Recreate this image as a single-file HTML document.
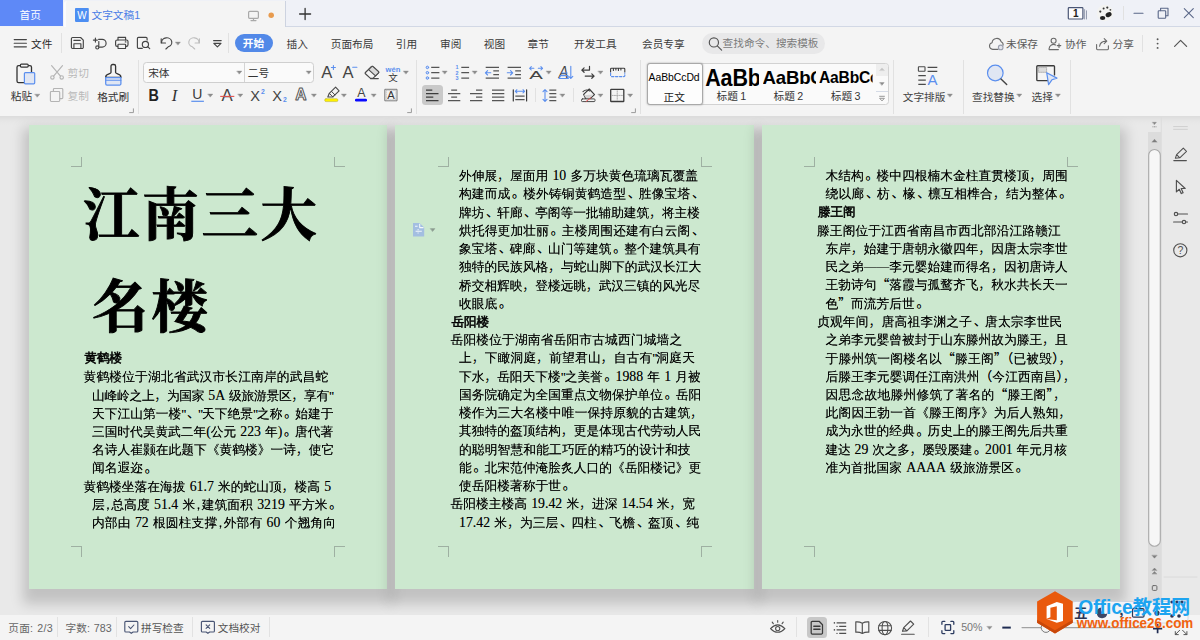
<!DOCTYPE html>
<html lang="zh-CN"><head><meta charset="utf-8"><title>文字文稿1</title>
<style>
*{box-sizing:border-box;margin:0;padding:0}
html,body{width:1200px;height:640px;overflow:hidden;background:#f4f4f4}
body{position:relative;font-family:"Liberation Sans","Noto Sans CJK SC",sans-serif;font-size:12px;color:#333}
#tabbar{position:absolute;left:0;top:0;width:1200px;height:27px;background:#eff1f7;box-shadow:inset 0 -1px 0 #d2d8e5}
#tabline{position:absolute;left:0;top:26px;width:66px;height:1px;background:#f1f2f6}
#hometab{position:absolute;left:0;top:0;width:63px;height:26px;background:#5e89f7}
#doctab{position:absolute;left:64px;top:1px;width:221.5px;height:26px;background:#f4f4f4;border-left:2.5px solid #fbfbfd;border-right:1px solid #cdd3e0;border-radius:3px 0 0 0}
#menubar{position:absolute;left:0;top:27px;width:1200px;height:31px;background:#f4f4f4}
#pill{position:absolute;left:234.5px;top:34px;width:38.5px;height:18px;border-radius:9px;background:#5289e8}
#search{position:absolute;left:702px;top:32.6px;width:123px;height:21.2px;border-radius:10.6px;background:#e8e8e9}
.u{font-size:10.67px;letter-spacing:0}
.sty{position:absolute;overflow:hidden;white-space:nowrap;font-family:"Liberation Sans",sans-serif;font-weight:700;color:#000;letter-spacing:-0.2px}
#ribbon{position:absolute;left:0;top:58px;width:1200px;height:58px;background:#f4f4f4}
#doc{position:absolute;left:0;top:116px;width:1200px;height:499px;background:linear-gradient(#dcdcdc,#e6e6e6 5px,#e9e9e9 9px);overflow:hidden}
#status{position:absolute;left:0;top:615px;width:1200px;height:25px;background:#f4f4f4}
.page{position:absolute;top:8.5px;width:358.5px;height:464.5px;background:#cce8cf;box-shadow:0 9px 12px 6px rgba(0,0,0,.17)}
.ln{position:absolute;white-space:pre;font-family:"Liberation Serif","WenQuanYi Zen Hei","Noto Serif CJK SC",serif;line-height:18px;height:18px;color:#000}
.fa{font-size:12.75px}
.ln .e{font-size:13.8px;letter-spacing:0 !important;text-shadow:0 0 .4px rgba(0,0,0,.4)}
.ln .hp{display:inline-block;width:.5em;text-align:center;font-family:"WenQuanYi Zen Hei","Noto Sans CJK SC",sans-serif}
.ln .qo,.ln .qc,.ln .cm{font-family:"Noto Sans CJK SC","WenQuanYi Zen Hei",sans-serif;font-weight:400}
.ln .cm{font-weight:300}
.ln .ds{font-family:"WenQuanYi Zen Hei","Noto Sans CJK SC",sans-serif}
.ln{text-shadow:0 0 .45px rgba(0,0,0,.6);word-spacing:1px}
.ln .pd{font-family:"Noto Sans CJK SC","WenQuanYi Zen Hei",sans-serif;font-weight:400;display:inline-block;width:1em;text-indent:.13em;position:relative;top:-.06em;letter-spacing:0}
.ln span{line-height:0}
.ln .hq{display:inline-block;width:4px;text-align:center;font-family:"Liberation Serif",serif;letter-spacing:0 !important}
.fb{font-size:12.75px}
.hd{position:absolute;white-space:nowrap;font-family:"WenQuanYi Zen Hei","Noto Sans CJK SC",sans-serif;font-size:12.6px;letter-spacing:-.1px;line-height:18px;height:18px;color:#000;-webkit-text-stroke:.55px #000}
.ttl{position:absolute;white-space:nowrap;font-family:"Liberation Serif","Noto Serif CJK SC",serif;font-weight:700;font-size:56.5px;letter-spacing:2.7px;line-height:70px;height:70px;color:#000;-webkit-text-stroke:0.9px #000}
.mk{position:absolute;width:11px;height:10.5px;border:0 solid #9eb0a2}
.t{position:absolute;white-space:nowrap;line-height:16px;height:16px}
</style></head>
<body>
<div id="tabbar"></div>
<div id="tabline"></div>
<div id="hometab"></div>
<div id="doctab"></div>
<div id="menubar"></div>
<div class="t u" style="left:19.50px;top:6.90px;color:#fff">首页</div>
<div class="t u" style="left:91.50px;top:6.90px;color:#4a7de6">文字文稿1</div>
<div class="t u" style="left:31.00px;top:35.60px;color:#2b2b2b">文件</div>
<div id="pill"></div>
<div class="t u" style="left:242.80px;top:35.30px;color:#fff;font-weight:700">开始</div>
<div class="t u" style="left:286.50px;top:35.60px;color:#3a3a3a">插入</div>
<div class="t u" style="left:330.80px;top:35.60px;color:#3a3a3a">页面布局</div>
<div class="t u" style="left:395.80px;top:35.60px;color:#3a3a3a">引用</div>
<div class="t u" style="left:440.00px;top:35.60px;color:#3a3a3a">审阅</div>
<div class="t u" style="left:483.80px;top:35.60px;color:#3a3a3a">视图</div>
<div class="t u" style="left:527.60px;top:35.60px;color:#3a3a3a">章节</div>
<div class="t u" style="left:574.00px;top:35.60px;color:#3a3a3a">开发工具</div>
<div class="t u" style="left:642.00px;top:35.60px;color:#3a3a3a">会员专享</div>
<div id="search"></div>
<div class="t u" style="left:722.60px;top:35.30px;color:#7a7a7a">查找命令、搜索模板</div>
<div class="t u" style="left:1006.00px;top:35.60px;color:#5a5a5a">未保存</div>
<div class="t u" style="left:1065.00px;top:35.60px;color:#5a5a5a">协作</div>
<div class="t u" style="left:1112.60px;top:35.60px;color:#5a5a5a">分享</div>
<div id="ribbon"></div>
<div style="position:absolute;left:61.00px;top:33.00px;width:1.00px;height:20.00px;background:#e1e1e1"></div>
<div style="position:absolute;left:228.00px;top:33.00px;width:1.00px;height:20.00px;background:#e1e1e1"></div>
<div style="position:absolute;left:1142.00px;top:35.00px;width:1.00px;height:17.00px;background:#e1e1e1"></div>
<div style="position:absolute;left:1122.80px;top:6.00px;width:1.00px;height:14.00px;background:#e1e1e1"></div>
<div style="position:absolute;left:138.00px;top:60.00px;width:1.00px;height:54.00px;background:#e1e1e1"></div>
<div style="position:absolute;left:416.00px;top:60.00px;width:1.00px;height:54.00px;background:#e1e1e1"></div>
<div style="position:absolute;left:640.10px;top:60.00px;width:1.00px;height:54.00px;background:#e1e1e1"></div>
<div style="position:absolute;left:893.00px;top:60.00px;width:1.00px;height:54.00px;background:#e1e1e1"></div>
<div style="position:absolute;left:963.00px;top:60.00px;width:1.00px;height:54.00px;background:#e1e1e1"></div>
<div style="position:absolute;left:1070.10px;top:60.00px;width:1.00px;height:54.00px;background:#e1e1e1"></div>
<div style="position:absolute;left:534.90px;top:88.00px;width:1.00px;height:14.00px;background:#e1e1e1"></div>
<div style="position:absolute;left:573.00px;top:88.00px;width:1.00px;height:14.00px;background:#e1e1e1"></div>
<div class="t u" style="left:10.80px;top:88.40px;color:#333">粘贴</div>
<div class="t u" style="left:67.60px;top:64.90px;color:#b9b9b9">剪切</div>
<div class="t u" style="left:67.60px;top:88.20px;color:#b9b9b9">复制</div>
<div class="t u" style="left:97.20px;top:88.50px;color:#333">格式刷</div>
<div style="position:absolute;left:143.30px;top:61.80px;width:170.60px;height:20.80px;background:#fafafa;border:1px solid #cfcfcf;border-radius:3.5px"></div>
<div style="position:absolute;left:244.00px;top:62.50px;width:1.00px;height:19.50px;background:#d4d4d4"></div>
<div class="t u" style="left:148.20px;top:64.80px;color:#333">宋体</div>
<div class="t u" style="left:247.80px;top:64.80px;color:#333">二号</div>
<div style="position:absolute;left:422.00px;top:85.00px;width:21.00px;height:20.40px;background:#c9c9c9;border-radius:3.5px"></div>
<div style="position:absolute;left:647.00px;top:62.60px;width:241.80px;height:42.80px;background:#fafafa;border:1px solid #d2d2d2;border-radius:3.5px"></div>
<div style="position:absolute;left:875.60px;top:63.60px;width:12.20px;height:12.00px;background:#eeeeee;border-radius:0 3px 0 0"></div>
<div style="position:absolute;left:875.60px;top:91.20px;width:12.20px;height:1.00px;background:#d5dbe6"></div>
<div style="position:absolute;left:647.30px;top:62.80px;width:56.00px;height:42.40px;background:#fdfdfd;border:1px solid #a9a9a9;border-radius:3px;box-shadow:0 0 2px rgba(0,0,0,.35)"></div>
<div class="t u" style="left:648.60px;top:70.30px;font-family:'Liberation Sans',sans-serif;font-size:10.4px;color:#000;letter-spacing:-0.05px">AaBbCcDd</div>
<div class="t u" style="left:663.60px;top:88.50px;color:#222">正文</div>
<div class="sty" style="left:705.3px;top:66.6px;width:54px;height:24px;font-size:21.5px;line-height:25px;transform:scaleY(1.07);transform-origin:0 50%">AaBb</div>
<div class="sty" style="left:762.6px;top:64.6px;width:53.8px;height:24px;font-size:18.6px;line-height:26.6px">AaBbC</div>
<div class="sty" style="left:819.4px;top:64.4px;width:57.4px;height:24px;font-size:16.6px;line-height:27px;transform:scaleX(.94);transform-origin:0 0">AaBbCc</div>
<div class="t u" style="left:716.60px;top:88.30px;color:#333;word-spacing:-0.5px">标题 1</div>
<div class="t u" style="left:773.60px;top:88.30px;color:#333;word-spacing:-0.5px">标题 2</div>
<div class="t u" style="left:830.80px;top:88.30px;color:#333;word-spacing:-0.5px">标题 3</div>
<div class="t u" style="left:902.80px;top:88.50px;color:#444">文字排版</div>
<div class="t u" style="left:972.00px;top:88.50px;color:#444">查找替换</div>
<div class="t u" style="left:1031.60px;top:88.50px;color:#444">选择</div>
<div id="doc">
<div class="page" style="left:28.5px">
<div class="mk" style="left:42.5px;top:32px;border-right-width:1px;border-bottom-width:1px"></div>
<div class="mk" style="left:305.7px;top:32px;border-left-width:1px;border-bottom-width:1px"></div>
<div class="mk" style="left:42.5px;top:421.5px;border-right-width:1px;border-top-width:1px"></div>
<div class="mk" style="left:305.7px;top:421.5px;border-left-width:1px;border-top-width:1px"></div>
<div class="ttl" style="left:54.5px;top:56.5px">江南三大</div>
<div class="ttl" style="left:63.5px;top:148.5px">名楼</div>
<div class="hd fa" style="left:55.90px;top:224.40px;">黄鹤楼</div>
<div class="ln fa" style="left:55.00px;top:243.90px;letter-spacing:0.139px;">黄鹤楼位于湖北省武汉市长江南岸的武昌蛇</div>
<div class="ln fa" style="left:63.50px;top:262.10px;letter-spacing:-0.270px;">山峰岭之上<span class="cm">，</span>为国家 <span class="e">5A</span> 级旅游景区<span class="cm">，</span>享有<span class="hq">&quot;</span></div>
<div class="ln fa" style="left:63.50px;top:280.30px;">天下江山第一楼<span class="hq">&quot;</span><span class="pd">、</span><span class="hq">&quot;</span>天下绝景<span class="hq">&quot;</span>之称<span class="pd">。</span>始建于</div>
<div class="ln fa" style="left:63.50px;top:298.50px;letter-spacing:-0.068px;">三国时代吴黄武二年<span class="e">(</span>公元 <span class="e">223</span> 年<span class="e">)</span><span class="pd">。</span>唐代著</div>
<div class="ln fa" style="left:63.50px;top:316.70px;">名诗人崔颢在此题下《黄鹤楼》一诗<span class="cm">，</span>使它</div>
<div class="ln fa" style="left:63.50px;top:334.90px;">闻名遐迩<span class="pd">。</span></div>
<div class="ln fa" style="left:55.00px;top:353.10px;">黄鹤楼坐落在海拔 <span class="e">61.7</span> 米的蛇山顶<span class="cm">，</span>楼高 <span class="e">5</span></div>
<div class="ln fa" style="left:63.50px;top:371.30px;letter-spacing:0.080px;">层<span class="hp">,</span>总高度 <span class="e">51.4</span> 米<span class="hp">,</span>建筑面积 <span class="e">3219</span> 平方米<span class="pd">。</span></div>
<div class="ln fa" style="left:63.50px;top:389.50px;letter-spacing:0.113px;">内部由 <span class="e">72</span> 根圆柱支撑<span class="hp">,</span>外部有 <span class="e">60</span> 个翘角向</div>
</div>
<div class="page" style="left:395px">
<div class="mk" style="left:42.5px;top:32px;border-right-width:1px;border-bottom-width:1px"></div>
<div class="mk" style="left:305.7px;top:32px;border-left-width:1px;border-bottom-width:1px"></div>
<div class="mk" style="left:42.5px;top:421.5px;border-right-width:1px;border-top-width:1px"></div>
<div class="mk" style="left:305.7px;top:421.5px;border-left-width:1px;border-top-width:1px"></div>
<div class="ln fb" style="left:64.00px;top:42.40px;">外伸展<span class="cm">，</span>屋面用 <span class="e">10</span> 多万块黄色琉璃瓦覆盖</div>
<div class="ln fb" style="left:64.00px;top:60.70px;letter-spacing:0.110px;">构建而成<span class="pd">。</span>楼外铸铜黄鹤造型<span class="pd">、</span>胜像宝塔<span class="pd">、</span></div>
<div class="ln fb" style="left:64.00px;top:79.00px;letter-spacing:-0.083px;">牌坊<span class="pd">、</span>轩廊<span class="pd">、</span>亭阁等一批辅助建筑<span class="cm">，</span>将主楼</div>
<div class="ln fb" style="left:64.00px;top:97.30px;letter-spacing:0.110px;">烘托得更加壮丽<span class="pd">。</span>主楼周围还建有白云阁<span class="pd">、</span></div>
<div class="ln fb" style="left:64.00px;top:115.60px;letter-spacing:-0.056px;">象宝塔<span class="pd">、</span>碑廊<span class="pd">、</span>山门等建筑<span class="pd">。</span>整个建筑具有</div>
<div class="ln fb" style="left:64.00px;top:133.90px;">独特的民族风格<span class="cm">，</span>与蛇山脚下的武汉长江大</div>
<div class="ln fb" style="left:64.00px;top:152.20px;letter-spacing:-0.056px;">桥交相辉映<span class="cm">，</span>登楼远眺<span class="cm">，</span>武汉三镇的风光尽</div>
<div class="ln fb" style="left:64.00px;top:170.50px;">收眼底<span class="pd">。</span></div>
<div class="hd fb" style="left:56.40px;top:188.15px;">岳阳楼</div>
<div class="ln fb" style="left:55.50px;top:206.40px;letter-spacing:0.132px;">岳阳楼位于湖南省岳阳市古城西门城墙之</div>
<div class="ln fb" style="left:64.00px;top:224.70px;letter-spacing:0.139px;">上<span class="cm">，</span>下瞰洞庭<span class="cm">，</span>前望君山<span class="cm">，</span>自古有<span class="hq">&quot;</span>洞庭天</div>
<div class="ln fb" style="left:64.00px;top:243.00px;letter-spacing:-0.043px;">下水<span class="cm">，</span>岳阳天下楼<span class="hq">&quot;</span>之美誉<span class="pd">。</span><span class="e">1988</span> 年 <span class="e">1</span> 月被</div>
<div class="ln fb" style="left:64.00px;top:261.30px;">国务院确定为全国重点文物保护单位<span class="pd">。</span>岳阳</div>
<div class="ln fb" style="left:64.00px;top:279.60px;letter-spacing:0.100px;">楼作为三大名楼中唯一保持原貌的古建筑<span class="cm">，</span></div>
<div class="ln fb" style="left:64.00px;top:297.80px;">其独特的盔顶结构<span class="cm">，</span>更是体现古代劳动人民</div>
<div class="ln fb" style="left:64.00px;top:316.00px;letter-spacing:0.118px;">的聪明智慧和能工巧匠的精巧的设计和技</div>
<div class="ln fb" style="left:64.00px;top:334.20px;">能<span class="pd">。</span>北宋范仲淹脍炙人口的《岳阳楼记》更</div>
<div class="ln fb" style="left:64.00px;top:352.50px;">使岳阳楼著称于世<span class="pd">。</span></div>
<div class="ln fb" style="left:55.50px;top:370.90px;">岳阳楼主楼高 <span class="e">19.42</span> 米<span class="cm">，</span>进深 <span class="e">14.54</span> 米<span class="cm">，</span>宽</div>
<div class="ln fb" style="left:64.00px;top:389.00px;letter-spacing:0.071px;"><span class="e">17.42</span> 米<span class="cm">，</span>为三层<span class="pd">、</span>四柱<span class="pd">、</span>飞檐<span class="pd">、</span>盔顶<span class="pd">、</span>纯</div>
</div>
<div class="page" style="left:761.5px">
<div class="mk" style="left:42.5px;top:32px;border-right-width:1px;border-bottom-width:1px"></div>
<div class="mk" style="left:305.7px;top:32px;border-left-width:1px;border-bottom-width:1px"></div>
<div class="mk" style="left:42.5px;top:421.5px;border-right-width:1px;border-top-width:1px"></div>
<div class="mk" style="left:305.7px;top:421.5px;border-left-width:1px;border-top-width:1px"></div>
<div class="ln fb" style="left:64.00px;top:42.30px;">木结构<span class="pd">。</span>楼中四根楠木金柱直贯楼顶<span class="cm">，</span>周围</div>
<div class="ln fb" style="left:64.00px;top:60.60px;letter-spacing:0.170px;">绕以廊<span class="pd">、</span>枋<span class="pd">、</span>椽<span class="pd">、</span>檩互相榫合<span class="cm">，</span>结为整体<span class="pd">。</span></div>
<div class="hd fb" style="left:56.40px;top:78.90px;">滕王阁</div>
<div class="ln fb" style="left:55.50px;top:97.00px;letter-spacing:0.083px;">滕王阁位于江西省南昌市西北部沿江路赣江</div>
<div class="ln fb" style="left:64.00px;top:115.20px;">东岸<span class="cm">，</span>始建于唐朝永徽四年<span class="cm">，</span>因唐太宗李世</div>
<div class="ln fb" style="left:64.00px;top:133.40px;">民之弟<span class="ds">—</span><span class="ds">—</span>李元婴始建而得名<span class="cm">，</span>因初唐诗人</div>
<div class="ln fb" style="left:64.00px;top:151.60px;">王勃诗句<span class="qo">“</span>落霞与孤鹜齐飞<span class="cm">，</span>秋水共长天一</div>
<div class="ln fb" style="left:64.00px;top:170.00px;">色<span class="qc">”</span>而流芳后世<span class="pd">。</span></div>
<div class="ln fb" style="left:55.50px;top:188.40px;letter-spacing:0.181px;">贞观年间<span class="cm">，</span>唐高祖李渊之子<span class="pd">、</span>唐太宗李世民</div>
<div class="ln fb" style="left:64.00px;top:206.80px;">之弟李元婴曾被封于山东滕州故为滕王<span class="cm">，</span>且</div>
<div class="ln fb" style="left:64.00px;top:225.10px;letter-spacing:0.200px;">于滕州筑一阁楼名以<span class="qo">“</span>滕王阁<span class="qc">”</span><span class="qo">（</span>已被毁<span class="qc">）</span><span class="cm">，</span></div>
<div class="ln fb" style="left:64.00px;top:243.40px;letter-spacing:0.080px;">后滕王李元婴调任江南洪州<span class="qo">（</span>今江西南昌<span class="qc">）</span><span class="cm">，</span></div>
<div class="ln fb" style="left:64.00px;top:261.50px;letter-spacing:0.250px;">因思念故地滕州修筑了著名的<span class="qo">“</span>滕王阁<span class="qc">”</span><span class="cm">，</span></div>
<div class="ln fb" style="left:64.00px;top:279.70px;letter-spacing:0.200px;">此阁因王勃一首《滕王阁序》为后人熟知<span class="cm">，</span></div>
<div class="ln fb" style="left:64.00px;top:297.80px;">成为永世的经典<span class="pd">。</span>历史上的滕王阁先后共重</div>
<div class="ln fb" style="left:64.00px;top:316.00px;letter-spacing:-0.239px;">建达 <span class="e">29</span> 次之多<span class="cm">，</span>屡毁屡建<span class="pd">。</span><span class="e">2001</span> 年元月核</div>
<div class="ln fb" style="left:64.00px;top:334.20px;">准为首批国家 <span class="e">AAAA</span> 级旅游景区<span class="pd">。</span></div>
</div>
</div>
<div id="status"></div>
<div style="position:absolute;left:56.75px;top:617.00px;width:1.00px;height:20.00px;background:#e2e2e2"></div>
<div style="position:absolute;left:116.10px;top:617.00px;width:1.00px;height:20.00px;background:#e2e2e2"></div>
<div style="position:absolute;left:192.00px;top:617.00px;width:1.00px;height:20.00px;background:#e2e2e2"></div>
<div style="position:absolute;left:268.90px;top:617.00px;width:1.00px;height:20.00px;background:#e2e2e2"></div>
<div style="position:absolute;left:796.00px;top:617.00px;width:1.00px;height:20.00px;background:#e2e2e2"></div>
<div style="position:absolute;left:928.00px;top:617.00px;width:1.00px;height:20.00px;background:#e2e2e2"></div>
<div class="t u" style="left:8.30px;top:619.60px;color:#666;word-spacing:.8px;letter-spacing:.25px">页面: 2/3</div>
<div class="t u" style="left:65.50px;top:619.60px;color:#666;word-spacing:.5px;letter-spacing:.1px">字数: 783</div>
<div class="t u" style="left:141.00px;top:619.60px;color:#555">拼写检查</div>
<div class="t u" style="left:217.80px;top:619.60px;color:#555">文档校对</div>
<div style="position:absolute;left:806.50px;top:617.00px;width:20.00px;height:20.50px;background:#c8c8c8;border-radius:3.5px"></div>
<div class="t u" style="left:961.20px;top:619.30px;color:#777">50%</div>
<svg id="icons" width="1200" height="640" viewBox="0 0 1200 640" style="position:absolute;left:0;top:0;pointer-events:none" fill="none" stroke-linecap="round" stroke-linejoin="round">
<!-- icons_top.py -->
<rect x="75" y="8.1" width="13.8" height="13.8" rx=".8" fill="#4c8ef2"/>
<text x="81.9" y="18.9" text-anchor="middle" font-family="Liberation Sans,sans-serif" font-size="10" font-weight="400" fill="#fff" stroke="none">W</text>
<g stroke="#a9a9a9" stroke-width="1.2"><rect x="248.6" y="11.4" width="9.8" height="6.9" rx="1"/><path d="M253.5 18.5v1.8M251 20.6h5"/></g>
<circle cx="271.2" cy="15.3" r="2.75" fill="#e89b4e"/>
<path d="M299.6 14h11M305.1 8.5v11" stroke="#333" stroke-width="1.3"/>
<rect x="1068.3" y="7.6" width="14.6" height="11.4" rx=".8" fill="#fdfdfe" stroke="#4a5675" stroke-width="1.2"/>
<text x="1075.7" y="17.3" text-anchor="middle" font-family="Liberation Sans,sans-serif" font-size="10" font-weight="700" fill="#222" stroke="none">1</text>
<path d="M1084.6 9.6v9.4M1086.5 10.8v8.2" stroke="#8b93a8" stroke-width=".9"/>
<g stroke="none"><circle cx="1105" cy="13" r="8.2" fill="#f3f3f1"/><ellipse cx="1108.6" cy="14.6" rx="3.1" ry="2.3" fill="#222" transform="rotate(-25 1108.6 14.6)"/><ellipse cx="1102.6" cy="18" rx="2.7" ry="2" fill="#222"/><circle cx="1100.3" cy="11.6" r="1.1" fill="#333"/><circle cx="1103.6" cy="8.6" r="1" fill="#333"/><circle cx="1107.3" cy="7.6" r="1.1" fill="#333"/><circle cx="1110.4" cy="9.8" r=".9" fill="#444"/></g>
<g stroke="#5a6788" stroke-width="1.1"><path d="M1134 13.3h9"/><path d="M1160.6 10.6v-2.3h7.4v7.4h-2.2"/><rect x="1158.2" y="10.7" width="7.5" height="7.5" rx=".8"/><path d="M1184.3 8.7l9 9M1193.3 8.7l-9 9"/></g>
<path d="M14.2 39.6h12.2M14.2 43.2h12.2M14.2 46.8h12.2" stroke="#444" stroke-width="1.15"/>
<g stroke="#444" stroke-width="1.15"><path d="M72.6 37.5h8l2.7 2.7v7.1a1.2 1.2 0 0 1-1.2 1.2h-9.5a1.2 1.2 0 0 1-1.2-1.2v-8.6a1.2 1.2 0 0 1 1.2-1.2z"/><path d="M73.9 48.3v-4.6h7v4.6M73.9 40.4h6.3"/><path d="M98.6 39.3h3.6a3.9 3.9 0 0 1 0 7.8h-3.2"/><path d="M98.8 41.5v4.3"/><circle cx="97.3" cy="47.4" r="1.55"/><path d="M93.4 40.1h4M95.4 38.1v4"/><path d="M118 40v-2.6h7.6v2.6"/><rect x="115.6" y="40" width="12.4" height="6.4" rx="1.6"/><rect x="118" y="44.2" width="7.6" height="4.3" rx=".6" fill="#f4f4f4"/><path d="M125.3 41.9h.6"/><path d="M142.3 48.3h-3.8a1.1 1.1 0 0 1-1.1-1.1v-8.7a1.1 1.1 0 0 1 1.1-1.1h7.5a1.1 1.1 0 0 1 1.1 1.1v1.6"/><circle cx="145.4" cy="44.4" r="3.1"/><path d="M147.7 46.7l2 2"/><path d="M161.2 38.7v4.3h4.3"/><path d="M161.6 42.6a5.1 4.6 0 1 1 6.6 4.2l-2.3 2.2"/><path d="M213.6 40.6h7.6M213.8 43.3l3.6 3.5l3.6-3.5z"/></g>
<g stroke="#bdbdbd" stroke-width="1.15"><path d="M199.4 38.7v4.3h-4.3"/><path d="M199 42.6a5.1 4.6 0 1 0-6.6 4.2l2.3 2.2"/></g>
<path d="M175.60 42.10 h4.80 l-2.40 2.80 z" fill="#8c8c8c" stroke="#8c8c8c" stroke-width=".4"/>
<g stroke="#555" stroke-width="1.2"><circle cx="713.9" cy="42.4" r="4.6"/><path d="M717.3 45.9l4.3 4.3"/></g>
<g stroke="#6a6a6a" stroke-width="1.1"><path d="M998 49.4h-5.3a3.4 3.4 0 0 1-.6-6.7a4.6 4.6 0 0 1 9-1a3.3 3.3 0 0 1 2 3.4"/><circle cx="1000.7" cy="47.4" r="2.3" stroke="#9a9fae" fill="#e3e5ec"/></g>
<g stroke="#6a6a6a" stroke-width="1.1"><circle cx="1053.6" cy="40.8" r="2.5"/><path d="M1058.4 49.6h-9.3v-1a4.4 4.4 0 0 1 6.5-3.6"/><path d="M1057.2 45.6h3.6M1059 43.8v3.6"/></g>
<g stroke="#6a6a6a" stroke-width="1.1"><path d="M1096.6 44.6v4.2a.9.9 0 0 0 .9.9h10a.9.9 0 0 0 .9-.9v-3"/><path d="M1099.6 46.3q.6-5 6.4-5.2M1104.2 38.6l2.6 2.5l-2.6 2.5"/></g>
<g fill="#555" stroke="none"><circle cx="1157.6" cy="39.3" r=".95"/><circle cx="1157.6" cy="43.6" r=".95"/><circle cx="1157.6" cy="47.9" r=".95"/></g>
<path d="M1174.6 46.4l6-6l6 6" stroke="#555" stroke-width="1.2"/>
<!-- icons_ribbon.py -->
<rect x="17" y="65.6" width="14.5" height="17" rx="1.6" stroke="#333" stroke-width="1.3"/>
<rect x="20.4" y="64.1" width="7.8" height="3" rx="1" fill="#f4f4f4" stroke="#333" stroke-width="1.2"/>
<rect x="24.4" y="72.6" width="10.3" height="11.2" rx="1" fill="#e0e6f3" stroke="#5b8fee" stroke-width="1.2"/>
<path d="M35.00 94.20 h4.80 l-2.40 2.80 z" fill="#8c8c8c" stroke="#8c8c8c" stroke-width=".4"/>
<g stroke="#b4b4b4" stroke-width="1.15"><path d="M51.6 65.6l8.9 10.6M62.5 65.6l-8.9 10.6"/><circle cx="52.4" cy="77.4" r="1.7"/><circle cx="61.7" cy="77.4" r="1.7"/></g>
<g stroke="#b4b4b4" stroke-width="1.15"><path d="M53.4 91v-1.6a.9.9 0 0 1 .9-.9h7.6a.9.9 0 0 1 .9.9v8.3a.9.9 0 0 1-.9.9h-1.8"/><rect x="50.4" y="91.5" width="9.3" height="10" rx=".9"/></g>
<path d="M111 72.6v-6.4a1.7 1.7 0 0 1 1.7-1.7h1.2a1.7 1.7 0 0 1 1.7 1.7v6.4c0 1.5 5.3 1.3 5.3 4.3v.6h-15.2v-.6c0-3 5.3-2.8 5.3-4.300z" stroke="#333" stroke-width="1.3"/>
<path d="M105.7 77.5h15.2v6.200a1.3 1.3 0 0 1-1.300 1.300h-12.600a1.300 1.300 0 0 1-1.300-1.300z" fill="#e0e6f3" stroke="#5b8fee" stroke-width="1.25"/>
<path d="M105.7 80.300h15.200" stroke="#5b8fee" stroke-width="1.1"/>
<path d="M133.40 108.80v3.8h-3.8" stroke="#9a9a9a" stroke-width="1"/>
<path d="M411.40 108.80v3.8h-3.8" stroke="#9a9a9a" stroke-width="1"/>
<path d="M635.40 108.80v3.8h-3.8" stroke="#9a9a9a" stroke-width="1"/>
<path d="M237.00 71.10 h4.80 l-2.40 2.80 z" fill="#8c8c8c" stroke="#8c8c8c" stroke-width=".4"/>
<path d="M306.40 71.10 h4.80 l-2.40 2.80 z" fill="#8c8c8c" stroke="#8c8c8c" stroke-width=".4"/>
<text x="326.9" y="78.4" text-anchor="middle" font-family="Liberation Sans,sans-serif" font-size="16.6" fill="#444" stroke="none">A</text>
<text x="348.1" y="78.4" text-anchor="middle" font-family="Liberation Sans,sans-serif" font-size="16.6" fill="#444" stroke="none">A</text>
<g stroke="#4a4a4a" stroke-width="1.2"></g>
<path d="M331.400 67.500h4M333.400 65.500v4M352.700 67.300h4.200" stroke="#5b8fee" stroke-width="1.1"/>
<path d="M370.500 78.400l-5.100-4.600a.9.900 0 0 1 0-1.300l6.200-6a.9.900 0 0 1 1.300 0l5.600 5.100a.9.900 0 0 1 0 1.300l-5.600 5.500z" stroke="#4a4a4a" stroke-width="1.15"/>
<path d="M368.600 69.600l3.100-3a.9.900 0 0 1 1.300 0l5.500 5a.9.900 0 0 1 0 1.300l-3 3z" fill="#d9d9d9" stroke="#4a4a4a" stroke-width="1.1"/>
<path d="M370.500 78.600h7.800" stroke="#4a4a4a" stroke-width="1.15"/>
<text x="393" y="71.600" text-anchor="middle" font-family="Liberation Sans,sans-serif" font-size="7.600" font-weight="700" fill="#5b8fee" stroke="none">wén</text>
<text x="393" y="80.600" text-anchor="middle" font-family="Noto Sans CJK SC,sans-serif" font-size="9.500" fill="#333" stroke="none">文</text>
<path d="M403.60 71.10 h4.80 l-2.40 2.80 z" fill="#8c8c8c" stroke="#8c8c8c" stroke-width=".4"/>
<text x="148.400" y="100.700" font-family="Liberation Sans,sans-serif" font-size="15.800" font-weight="700" fill="#222" stroke="none" textLength="10.400" lengthAdjust="spacingAndGlyphs">B</text>
<text x="171.800" y="100.600" font-family="Liberation Serif,serif" font-size="16.500" font-style="italic" fill="#333" stroke="none">I</text>
<text x="197.300" y="99.200" text-anchor="middle" font-family="Liberation Sans,sans-serif" font-size="14" fill="#3a3a3a" stroke="none">U</text>
<path d="M191.300 101.300h12.600" stroke="#5b8fee" stroke-width="1.2" stroke-linecap="butt"/>
<path d="M208.00 94.10 h4.80 l-2.40 2.80 z" fill="#8c8c8c" stroke="#8c8c8c" stroke-width=".4"/>
<text x="227.2" y="100.9" text-anchor="middle" font-family="Liberation Sans,sans-serif" font-size="16.8" fill="#444" stroke="none">A</text>
<path d="M220.200 96.400h14.100" stroke="#e0524f" stroke-width="1.1" stroke-linecap="butt"/>
<path d="M238.00 94.10 h4.80 l-2.40 2.80 z" fill="#8c8c8c" stroke="#8c8c8c" stroke-width=".4"/>
<text x="255.2" y="100.7" text-anchor="middle" font-family="Liberation Sans,sans-serif" font-size="14.6" fill="#444" stroke="none">X</text>
<text x="277.2" y="100.7" text-anchor="middle" font-family="Liberation Sans,sans-serif" font-size="14.6" fill="#444" stroke="none">X</text>
<text x="261" y="94.400" font-family="Liberation Sans,sans-serif" font-size="6.800" font-weight="700" fill="#5b8fee" stroke="none">2</text>
<text x="283" y="102.400" font-family="Liberation Sans,sans-serif" font-size="6.800" font-weight="700" fill="#5b8fee" stroke="none">2</text>
<text x="301" y="100.400" text-anchor="middle" font-family="Liberation Sans,sans-serif" font-size="15.600" font-weight="700" fill="#fcfcfc" stroke="#555" stroke-width=".95">A</text>
<path d="M311.60 94.10 h4.80 l-2.40 2.80 z" fill="#8c8c8c" stroke="#8c8c8c" stroke-width=".4"/>
<path d="M327.800 97l1.500-3.700l6.300-6.100l3.500 3.600l-6.300 6.100z" stroke="#4a4a4a" stroke-width="1.100"/><path d="M329.300 93.300l3.500 3.600M331.400 91.300l3.500 3.600" stroke="#4a4a4a" stroke-width="1"/>
<rect x="324.700" y="98.700" width="13.200" height="2.900" rx="1.300" fill="#fff100" stroke="#b5ae2a" stroke-width=".5"/>
<path d="M341.60 94.10 h4.80 l-2.40 2.80 z" fill="#8c8c8c" stroke="#8c8c8c" stroke-width=".4"/>
<text x="361.3" y="97.4" text-anchor="middle" font-family="Liberation Sans,sans-serif" font-size="12.4" fill="#444" stroke="none">A</text>
<rect x="355" y="98.800" width="12" height="2.600" rx="1.200" fill="#0a0aff" stroke="none"/>
<path d="M371.40 94.10 h4.80 l-2.40 2.80 z" fill="#8c8c8c" stroke="#8c8c8c" stroke-width=".4"/>
<rect x="385.200" y="89.300" width="11.800" height="11.500" stroke="#7a7a7a" stroke-width="1" fill="#f2f2f2"/>
<path d="M386.200 90.300h9.800v9.500h-9.800z" stroke="#bdbdbd" stroke-width=".8" stroke-dasharray="1.200 1.200"/>
<text x="391.1" y="99.4" text-anchor="middle" font-family="Liberation Sans,sans-serif" font-size="11.2" fill="#333" stroke="none">A</text>
<g stroke="#5b8fee" stroke-width="1" fill="#cfdcf7"><circle cx="427.400" cy="67.400" r="1.250"/><circle cx="427.400" cy="72.700" r="1.250"/><circle cx="427.400" cy="78" r="1.250"/></g>
<path d="M431.20 67.40H439.40M431.20 72.70H439.40M431.20 78.00H439.40" stroke="#555" stroke-width="1.25" stroke-linecap="butt"/>
<path d="M442.40 71.10 h4.80 l-2.40 2.80 z" fill="#8c8c8c" stroke="#8c8c8c" stroke-width=".4"/>
<text x="457" y="69.3" text-anchor="middle" font-family="Liberation Sans,sans-serif" font-size="5.400" font-weight="700" fill="#5b8fee" stroke="none">1</text>
<text x="457" y="74.6" text-anchor="middle" font-family="Liberation Sans,sans-serif" font-size="5.400" font-weight="700" fill="#5b8fee" stroke="none">2</text>
<text x="457" y="79.9" text-anchor="middle" font-family="Liberation Sans,sans-serif" font-size="5.400" font-weight="700" fill="#5b8fee" stroke="none">3</text>
<path d="M461.30 67.40H469.10M461.30 72.70H469.10M461.30 78.00H469.10" stroke="#555" stroke-width="1.25" stroke-linecap="butt"/>
<path d="M472.40 71.10 h4.80 l-2.40 2.80 z" fill="#8c8c8c" stroke="#8c8c8c" stroke-width=".4"/>
<path d="M485.70 67.30H499.00M493.30 70.90H499.00M493.30 74.60H499.00M485.70 78.20H499.00" stroke="#555" stroke-width="1.25" stroke-linecap="butt"/>
<path d="M485.400 72.800h5.400M487.600 70.600l-2.200 2.200l2.200 2.200" stroke="#5b8fee" stroke-width="1.100"/>
<path d="M507.60 67.30H521.00M515.20 70.90H521.00M515.20 74.60H521.00M507.60 78.20H521.00" stroke="#555" stroke-width="1.25" stroke-linecap="butt"/>
<path d="M507.300 72.800h5.400M510.500 70.600l2.200 2.200l-2.200 2.200" stroke="#5b8fee" stroke-width="1.100"/>
<text x="536" y="78.6" text-anchor="middle" font-family="Liberation Sans,sans-serif" font-size="11.8" fill="#444" stroke="none" textLength="13.6" lengthAdjust="spacingAndGlyphs">A</text>
<path d="M529.600 68.300h4.300M531.300 66.600l-1.700 1.700l1.700 1.700M538.300 68.300h4.300M540.900 66.600l1.700 1.700l-1.700 1.700" stroke="#5b8fee" stroke-width="1.050"/>
<path d="M546.40 71.10 h4.80 l-2.40 2.80 z" fill="#8c8c8c" stroke="#8c8c8c" stroke-width=".4"/>
<text x="563.6" y="78.3" text-anchor="middle" font-family="Liberation Sans,sans-serif" font-size="16" fill="#444" stroke="none" font-style="italic" textLength="9.6" lengthAdjust="spacingAndGlyphs">A</text>
<path d="M560.500 75.600h7.200l.600 2.900h-9.300zM561.800 73h5.400" stroke="#5b8fee" stroke-width="1.100"/>
<path d="M570.800 66.200v12.200M568.800 76.300l2 2.200l2-2.200" stroke="#5b8fee" stroke-width="1.100"/>
<path d="M589.500 66.400v3.700h-7.600M584.100 67.900l-2.300 2.200l2.300 2.200M585.200 76.100h8.800M591.800 73.900l2.300 2.200l-2.300 2.200" stroke="#3c3c3c" stroke-width="1.200"/>
<path d="M598.20 71.10 h4.80 l-2.40 2.80 z" fill="#8c8c8c" stroke="#8c8c8c" stroke-width=".4"/>
<path d="M610.600 72v-2.900a.9.900 0 0 1 .9-.9h12.400a.9.900 0 0 1 .9.900v2.900M613.400 68.400v2M615.900 68.400v1.500M618.400 68.400v2M620.900 68.400v1.500" stroke="#3c3c3c" stroke-width="1.100"/>
<path d="M610.600 73v2.700a.9.900 0 0 0 .9.900h12.400a.9.900 0 0 0 .9-.9v-2.700" stroke="#5b8fee" stroke-width="1.150" stroke-dasharray="2.400 1.600"/>
<path d="M426.00 90.00H432.30M426.00 93.50H438.50M426.00 97.00H433.30M426.00 100.50H438.50" stroke="#3c3c3c" stroke-width="1.25" stroke-linecap="butt"/>
<path d="M451.20 90.00H457.10M448.00 93.50H460.30M451.20 97.00H457.10M448.00 100.50H460.30" stroke="#555" stroke-width="1.25" stroke-linecap="butt"/>
<path d="M476.00 90.00H482.30M470.00 93.50H482.30M476.00 97.00H482.30M470.00 100.50H482.30" stroke="#555" stroke-width="1.25" stroke-linecap="butt"/>
<path d="M492.00 90.00H504.30M492.00 93.50H504.30M492.00 97.00H504.30M492.00 100.50H504.30" stroke="#555" stroke-width="1.25" stroke-linecap="butt"/>
<path d="M513.300 89.800v11.200M526.600 89.800v11.200" stroke="#3c3c3c" stroke-width="1.200"/>
<path d="M515.30 96.00H524.60M515.30 99.60H524.60" stroke="#555" stroke-width="1.25" stroke-linecap="butt"/>
<path d="M515.300 91.300h9.300M516.900 89.700l-1.600 1.600l1.600 1.600M523 89.700l1.600 1.600l-1.600 1.600" stroke="#5b8fee" stroke-width="1.050"/>
<path d="M545 89.600v11.800M543 91.600l2-2l2 2M543 99.400l2 2l2-2" stroke="#5b8fee" stroke-width="1.100"/>
<path d="M549.30 90.00H556.30M549.30 93.50H556.30M549.30 97.00H556.30M549.30 100.50H556.30" stroke="#555" stroke-width="1.25" stroke-linecap="butt"/>
<path d="M560.10 94.10 h4.80 l-2.40 2.80 z" fill="#8c8c8c" stroke="#8c8c8c" stroke-width=".4"/>
<path d="M583.600 94.300l5.700-5.300l5.200 5.600l-4.900 4.600h-3.600z" stroke="#3c3c3c" stroke-width="1.150"/><path d="M583 91.600q3-3 6.800-.6" stroke="#3c3c3c" stroke-width="1.050"/>
<path d="M583.800 95.300l9.500-.8l-3.700 3.400h-3.500z" fill="#d6d6d6" stroke="none"/>
<rect x="581.500" y="98.900" width="13.500" height="2.700" rx=".9" stroke="#4a4a4a" stroke-width="1" fill="#f4f4f4"/>
<path d="M586.200 101.400l4.700-3.600" stroke="#e0524f" stroke-width="1"/>
<path d="M598.20 94.10 h4.80 l-2.40 2.80 z" fill="#8c8c8c" stroke="#8c8c8c" stroke-width=".4"/>
<rect x="610.700" y="89.400" width="13.100" height="12.100" rx=".6" stroke="#3c3c3c" stroke-width="1.300"/>
<path d="M617.250 90.800v9.400M612 95.450h10.500" stroke="#a8a8a8" stroke-width=".9" stroke-dasharray="1.200 1.100"/>
<path d="M627.90 94.10 h4.80 l-2.40 2.80 z" fill="#8c8c8c" stroke="#8c8c8c" stroke-width=".4"/>
<path d="M879.800 70.300l2.200-2.400l2.200 2.400z" fill="#c4c4c4" stroke="#c4c4c4" stroke-width=".4"/>
<path d="M879.80 82.60 h4.40 l-2.20 2.60 z" fill="#8c8c8c" stroke="#8c8c8c" stroke-width=".4"/>
<path d="M879.600 96.300h4.800M879.900 98.600l2.100 2.300l2.100-2.300z" stroke="#8a8a8a" stroke-width=".9"/>
<rect x="918.400" y="66.800" width="6.600" height="4.500" rx=".5" stroke="#4a4a4a" stroke-width="1.100"/>
<path d="M927.60 67.30H937.30M927.60 71.30H937.30" stroke="#4a4a4a" stroke-width="1.25" stroke-linecap="butt"/>
<path d="M918.30 75.50H925.80M918.30 80.00H925.80M918.30 84.40H925.80" stroke="#4a4a4a" stroke-width="1.25" stroke-linecap="butt"/>
<text x="932.6" y="84.6" text-anchor="middle" font-family="Liberation Sans,sans-serif" font-size="15" fill="#5b8fee" stroke="none">A</text>
<path d="M947.60 94.10 h4.80 l-2.40 2.80 z" fill="#8c8c8c" stroke="#8c8c8c" stroke-width=".4"/>
<circle cx="995.300" cy="73" r="7.800" fill="#e0e6f3" stroke="#5b8fee" stroke-width="1.200"/>
<path d="M1001 78.900l5.700 5.600" stroke="#444" stroke-width="1.400"/>
<path d="M1017.00 94.10 h4.80 l-2.40 2.80 z" fill="#8c8c8c" stroke="#8c8c8c" stroke-width=".4"/>
<path d="M1048 80.600h-10.300a.9.900 0 0 1-.9-.9v-13.100a.9.900 0 0 1 .9-.9h15.900a.9.900 0 0 1 .9.900v8.300" stroke="#3a3a3a" stroke-width="1.350"/>
<rect x="1038.600" y="67.300" width="8" height="5" fill="#dcdcdc" stroke="#9a9a9a" stroke-width=".7" stroke-dasharray="1 1"/>
<path d="M1046.700 72.700l10.200 5.400l-5 1.700l-3.300 4.900z" fill="#e0e6f3" stroke="#5b8fee" stroke-width="1.200"/>
<path d="M1055.60 94.10 h4.80 l-2.40 2.80 z" fill="#8c8c8c" stroke="#8c8c8c" stroke-width=".4"/>
<!-- icons_status.py -->
<path d="M125.90 621.4h10.800a1.100 1.100 0 0 1 1.100 1.100v8.400a1.100 1.100 0 0 1-1.100 1.100h-3.600l-1.800 1.300l-1.800-1.300h-3.600a1.100 1.100 0 0 1-1.100-1.100v-8.400a1.100 1.100 0 0 1 1.100-1.100z" stroke="#4a5675" stroke-width="1.150"/>
<path d="M128.70 626.700l1.900 1.900l3.300-3.600" stroke="#4a5675" stroke-width="1.100"/>
<path d="M202.50 621.4h10.800a1.100 1.100 0 0 1 1.100 1.100v8.400a1.100 1.100 0 0 1-1.100 1.100h-3.600l-1.800 1.300l-1.800-1.300h-3.600a1.100 1.100 0 0 1-1.100-1.100v-8.400a1.100 1.100 0 0 1 1.100-1.100z" stroke="#4a5675" stroke-width="1.150"/>
<path d="M206.10 624.800l3.600 3.600M209.70 624.800l-3.600 3.600" stroke="#4a5675" stroke-width="1.100"/>
<g stroke="#4f4f4f" stroke-width="1.100"><path d="M770.500 628.600q7.200-7.400 14.400 0q-7.200 7.400-14.400 0z"/><circle cx="777.700" cy="628.600" r="2.100"/><path d="M777.700 620.600v1.700M772.200 622.200l1.100 1.500M783.200 622.200l-1.100 1.500"/></g>
<g stroke="#3a3a3a" stroke-width="1.250"><path d="M812.300 621.300h6.800l3.400 3.400v8.200a1.100 1.100 0 0 1-1.100 1.100h-9.100a1.100 1.100 0 0 1-1.100-1.100v-10.500a1.100 1.100 0 0 1 1.100-1.100z"/><path d="M813.800 626.200h6.200M813.800 629.300h6.200" stroke-width="1.400"/></g>
<path d="M836.600 622.900h9.600M839.200 626.400h7M836.600 629.900h9.600M839.200 633.400h7" stroke="#4f4f4f" stroke-width="1.200" stroke-linecap="butt"/>
<g fill="#4f4f4f" stroke="none"><circle cx="834.400" cy="622.900" r=".8"/><circle cx="837" cy="626.400" r=".7"/><circle cx="834.400" cy="629.900" r=".8"/><circle cx="837" cy="633.400" r=".7"/></g>
<path d="M862.300 623.200q-3-1.700-6.500-1.300v10.300q3.500-.4 6.500 1.300q3-1.700 6.500-1.300v-10.300q-3.500-.4-6.500 1.300zM862.300 623.200v10.300" stroke="#4f4f4f" stroke-width="1.150"/>
<g stroke="#4f4f4f" stroke-width="1.100"><circle cx="885" cy="628.100" r="6.600"/><ellipse cx="885" cy="628.100" rx="2.900" ry="6.600"/><path d="M878.900 625.800h12.200M878.900 630.400h12.200"/></g>
<path d="M902.500 631.300l1.200-3.600l6.800-6.700l3.200 3.200l-6.800 6.700zM903.700 627.700l3.200 3.200M901.600 634.200h12.600" stroke="#4f4f4f" stroke-width="1.150"/>
<g stroke="#2d3c60" stroke-width="1.300"><path d="M941.900 624.300v-2a.9.900 0 0 1 .9-.9h2M950.900 621.400h2a.9.900 0 0 1 .9.900v2M953.800 630.700v2a.9.900 0 0 1-.9.900h-2M944.800 633.600h-2a.9.900 0 0 1-.9-.9v-2"/><rect x="945.100" y="624.600" width="5.500" height="5.800" rx=".6"/></g>
<path d="M987.20 626.40 h4.80 l-2.40 2.80 z" fill="#8c8c8c" stroke="#8c8c8c" stroke-width=".4"/>
<path d="M1002.300 627.600h8.500" stroke="#1f2c52" stroke-width="2" stroke-linecap="butt"/>
<path d="M1022 627.600h124" stroke="#a2a2a2" stroke-width="1.100"/>
<circle cx="1046" cy="627.600" r="4.800" fill="#f4f4f4" stroke="#7a7a7a" stroke-width="1"/>
<path d="M1153 628.700h9.200M1157.600 624.100v9.200" stroke="#1f2c52" stroke-width="1.700" stroke-linecap="butt"/>
<path d="M1179.600 630.300l-4.300 4.300M1175.300 631.600v3h3M1182.600 630.300l4.300 4.300M1186.900 631.600v3h-3" stroke="#555" stroke-width="1"/>
<rect x="1148" y="132" width="13" height="483" fill="#dcdcdc" stroke="none"/>
<path d="M1161.300 117v498" stroke="#dddddd" stroke-width="1"/>
<path d="M1152.600 122.300h3.800l-1.900 2.200z" fill="#858585" stroke="#858585" stroke-width=".4"/>
<path d="M1152.600 126.800h.8M1154.100 126.800h.8M1155.600 126.800h.8" stroke="#7a7a7a" stroke-width="1" stroke-linecap="butt"/>
<path d="M1152.100 141.900l2.400-2.700l2.400 2.700z" fill="#7d7d7d" stroke="#7d7d7d" stroke-width=".4"/>
<rect x="1148.700" y="149.500" width="11.600" height="396.700" rx="5.800" fill="#f6f6f6" stroke="#a9a9a9" stroke-width="1.100"/>
<path d="M1152.100 555.500l2.400 2.700l2.400-2.700z" fill="#7d7d7d" stroke="#7d7d7d" stroke-width=".4"/>
<path d="M1152.300 570.300l2.200-2.300l2.200 2.300zM1152.300 573.800l2.200-2.300l2.200 2.300z" fill="#7d7d7d" stroke="#7d7d7d" stroke-width=".4"/>
<rect x="1152.300" y="585.600" width="4.600" height="4.800" rx="1" stroke="#6a6a6a" stroke-width="1"/>
<path d="M1173.600 126.600h13.800M1173.600 129.300h13.800" stroke="#cfcfcf" stroke-width="1"/>
<path d="M1175.300 158.300l1.300-3.700l6.700-6.500l3.200 3.200l-6.700 6.500zM1176.600 154.600l3.200 3.200M1173.800 160.600h12.600" stroke="#505050" stroke-width="1.050"/>
<path d="M1176.400 180.300v11.600l2.900-2.600l1.900 4.300l1.900-.9l-1.900-4.200h4z" stroke="#505050" stroke-width="1.150"/>
<g stroke="#505050" stroke-width="1.150"><path d="M1177.900 214h9.600M1173.600 222h8.600M1185.900 222h1.600"/><circle cx="1176" cy="214" r="1.700"/><circle cx="1184" cy="222" r="1.700"/></g>
<circle cx="1180.300" cy="250.300" r="6.600" stroke="#505050" stroke-width="1.100"/>
<text x="1180.300" y="254" text-anchor="middle" font-family="Liberation Sans,sans-serif" font-size="10.500" fill="#505050" stroke="none">?</text>
<path d="M1164 577h33" stroke="#dadada" stroke-width="1"/>
<path d="M413 223h6.600l4.600 4.600v8.900h-11.200z" fill="#a3bee1" stroke="none"/>
<path d="M419.700 223.800v3.800h3.800M415 226.300h2.600M415.600 231.300h6.200M417.600 229.600l1 .0M417.600 233l1 0" stroke="#f3f8fb" stroke-width="1.100" stroke-linecap="butt"/>
<path d="M430.40 228.60 h4.60 l-2.30 2.80 z" fill="#8b9b90" stroke="#8b9b90" stroke-width=".4"/>
<!-- icons_wm.py -->
<rect x="1071" y="601.500" width="117" height="21.500" rx="4" fill="#f6f7fa" stroke="#c9cfdd" stroke-width=".8" opacity=".92"/>
<text x="1074" y="617.500" font-family="Noto Sans CJK SC,sans-serif" font-size="13.500" font-weight="700" fill="#2b3554" stroke="none">五</text>
<path d="M1101.300 607.600a5.300 5.300 0 1 0 6 6a4.600 4.600 0 0 1-6-6z" fill="#3c4666" stroke="none"/>
<text x="1118" y="616" font-family="Noto Sans CJK SC,sans-serif" font-size="12" font-weight="700" fill="#2b3554" stroke="none">，</text>
<rect x="1132.500" y="608.600" width="11.500" height="8.600" rx="1.200" stroke="#2b3554" stroke-width="1.200"/>
<g fill="#2b3554" stroke="none"><circle cx="1172" cy="602" r="1.600"/><circle cx="1177" cy="602" r="1.600"/><circle cx="1182" cy="602" r="1.600"/><circle cx="1172" cy="616" r="1.800"/><circle cx="1179" cy="616" r="1.800"/><circle cx="1157" cy="613" r="2.600"/></g>
<path d="M1055 591.200l17.700 10.300v21.200l-17.700 10.800l-17.900-10.800v-21.200z" fill="#e9590d" stroke="none"/>
<path d="M1055 633.500l17.700-10.800v-3l-17.700 10.600l-17.900-10.600v3z" fill="#c9480a" stroke="none"/>
<path d="M1046.600 606.300l10.200-4.300l6.200 1.700v17.200l-6.200 1.800l-10.200-3.800l10.200 1.400v-14.100l-6.400 1.500v9.600l-3.800 1.500z" fill="#fff" stroke="none"/>
<text x="1078.300" y="614.300" font-family="Liberation Sans,Noto Sans CJK SC,sans-serif" font-size="19.500" font-weight="700" fill="#1da4f0" stroke="none" textLength="112" lengthAdjust="spacingAndGlyphs">Office教程网</text>
<text x="1076.800" y="627.600" font-family="Liberation Sans,sans-serif" font-size="14.800" font-weight="700" fill="#f1620f" stroke="none" textLength="116.500" lengthAdjust="spacingAndGlyphs">www.office26.com</text>
</svg>

</body></html>
